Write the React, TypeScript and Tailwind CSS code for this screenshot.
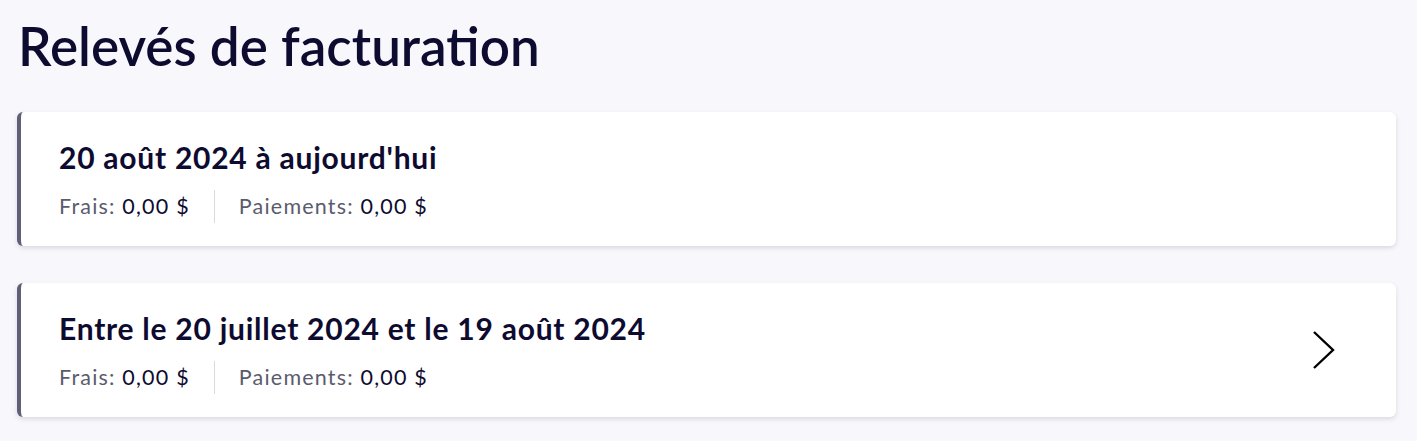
import React from "react";

const font = { fontFamily: "Lato, 'Open Sans', sans-serif" };

function Card({ title, chevron }: { title: string; chevron?: boolean }) {
  return (
    <div className="flex items-start h-[134px] bg-white rounded-[6px] border-l-4 border-[#5f5f78] shadow-[0_2px_5px_rgba(20,20,50,0.14)] pl-[38px] pr-[60px] pt-[27px]">
      <div className="flex-1 flex flex-col">
        <div className="text-[30px] leading-[36px] font-bold tracking-[0.75px] text-[#0e0b30]">{title}</div>
        <div className="flex items-center mt-[15px] text-[21.5px] leading-[33px] tracking-[1.2px]">
          <div className="pr-[24px]">
            <span className="text-[#5b5b6e]">Frais:</span> <span className="text-[#0e0b30]">0,00 $</span>
          </div>
          <div className="border-l border-[#d9d9df] pl-[24px]">
            <span className="text-[#5b5b6e]">Paiements:</span> <span className="text-[#0e0b30]">0,00 $</span>
          </div>
        </div>
      </div>
      {chevron && (
        <svg width="24" height="40" viewBox="0 0 24 40" className="shrink-0 self-center -mt-[27px]">
          <path d="M2 2 L21 20 L2 38" fill="none" stroke="#000" strokeWidth="2.4" />
        </svg>
      )}
    </div>
  );
}

export default function App() {
  return (
    <div className="min-h-[441px] bg-[#f8f8fc] px-[17px] pt-[14px]" style={font}>
      <h1 className="text-[53px] leading-[64px] font-semibold text-[#0e0b30] pl-[1px]">Relevés de facturation</h1>
      <div className="flex flex-col gap-[37px] mt-[34px] pr-[4px]">
        <Card title="20 août 2024 à aujourd'hui" />
        <Card title="Entre le 20 juillet 2024 et le 19 août 2024" chevron />
      </div>
    </div>
  );
}
